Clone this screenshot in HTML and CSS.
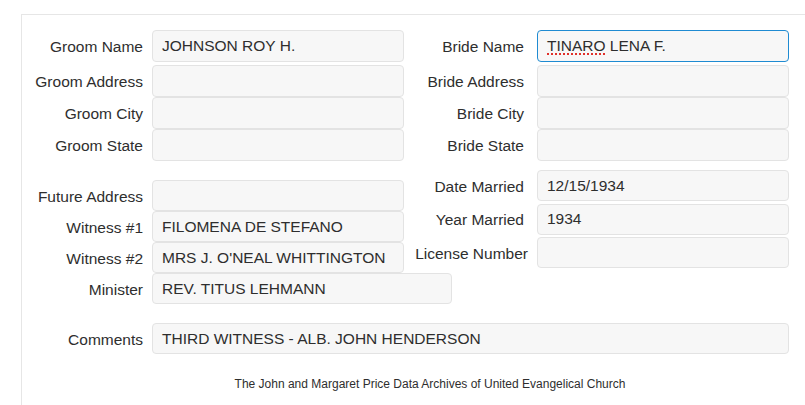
FILE: index.html
```html
<!DOCTYPE html>
<html>
<head>
<meta charset="utf-8">
<link rel="stylesheet" href="styles.css">
</head>
<body>
<div class="page">
  <div class="panel">
    <div class="grid-top">
      <div class="label l1 first">Groom Name</div>
      <div class="input first">JOHNSON ROY H.</div>
      <div class="label l2 first">Bride Name</div>
      <div class="input focus first"><span class="spell">TINARO</span>&nbsp;LENA F.</div>

      <div class="label l1">Groom Address</div>
      <div class="input"></div>
      <div class="label l2">Bride Address</div>
      <div class="input"></div>

      <div class="label l1">Groom City</div>
      <div class="input"></div>
      <div class="label l2">Bride City</div>
      <div class="input"></div>

      <div class="label l1">Groom State</div>
      <div class="input"></div>
      <div class="label l2">Bride State</div>
      <div class="input"></div>
    </div>

    <div class="section2">
      <div class="col-left">
        <div class="row">
          <div class="label l1">Future Address</div>
          <div class="input"></div>
        </div>
        <div class="row">
          <div class="label l1">Witness #1</div>
          <div class="input">FILOMENA DE STEFANO</div>
        </div>
        <div class="row">
          <div class="label l1">Witness #2</div>
          <div class="input">MRS J. O'NEAL WHITTINGTON</div>
        </div>
        <div class="row">
          <div class="label l1">Minister</div>
          <div class="input wide">REV. TITUS LEHMANN</div>
        </div>
      </div>
      <div class="col-right">
        <div class="row">
          <div class="label l2">Date Married</div>
          <div class="input">12/15/1934</div>
        </div>
        <div class="row">
          <div class="label l2">Year Married</div>
          <div class="input">1934</div>
        </div>
        <div class="row">
          <div class="label l2 tight">License Number</div>
          <div class="input"></div>
        </div>
      </div>
    </div>

    <div class="row comments">
      <div class="label l1">Comments</div>
      <div class="input full">THIRD WITNESS - ALB. JOHN HENDERSON</div>
    </div>

    <div class="footer">The John and Margaret Price Data Archives of United Evangelical Church</div>
  </div>
</div>
</body>
</html>
```

FILE: styles.css
```css
html, body {
  margin: 0;
  padding: 0;
  overflow: hidden;
  background: #ffffff;
}

body {
  font-family: "Liberation Sans", Arial, sans-serif;
  color: #2e2e2e;
  font-size: 15.5px;
}

.page {
  padding: 14px 0 0 21px;
}

.panel {
  height: calc(100vh - 14px);
  border-top: 1px solid #e6e6e6;
  border-left: 1px solid #e6e6e6;
  padding-top: 15px;
  box-sizing: border-box;
}

.grid-top {
  display: grid;
  grid-template-columns: 130px 252px 133px 252px;
  grid-template-rows: 35px 32px 32px 32px;
}

.grid-top .first {
  margin-bottom: 3px;
}

.label {
  display: flex;
  align-items: center;
  justify-content: flex-end;
  white-space: nowrap;
  color: #2e2e2e;
  flex-shrink: 0;
  padding-top: 2px;
  box-sizing: border-box;
}

.l1 {
  padding-right: 9px;
}

.l2 {
  padding-right: 13px;
}

.l2.tight {
  padding-right: 9px;
}

.input {
  box-sizing: border-box;
  height: 32px;
  border: 1px solid #e3e3e3;
  border-radius: 4px;
  background: #f7f7f7;
  padding: 0 9px;
  display: flex;
  align-items: center;
  color: #2e2e2e;
  white-space: nowrap;
  flex-shrink: 0;
}

.input.focus {
  border-color: #1f8bd2;
}

.spell {
  text-decoration: underline dotted #e0302a;
  text-decoration-thickness: 2px;
  text-underline-offset: 2px;
}

.section2 {
  display: flex;
  margin-top: 9px;
}

.col-left {
  width: 382px;
  flex-shrink: 0;
  padding-top: 10px;
  display: flex;
  flex-direction: column;
}

.col-left .row {
  display: flex;
  height: 31px;
}

.col-left .label {
  width: 130px;
}

.col-left .input {
  width: 252px;
  height: 31px;
}

.col-left .input.wide {
  width: 300px;
}

.col-right {
  display: flex;
  flex-direction: column;
  gap: 2.5px;
}

.col-right .row {
  display: flex;
  height: 31px;
}

.col-right .label {
  width: 133px;
}

.col-right .input {
  width: 252px;
  height: 31px;
}

.comments {
  display: flex;
  margin-top: 19px;
  height: 31px;
}

.comments .label {
  width: 130px;
}

.input.full {
  width: 637px;
  height: 31px;
}

.footer {
  padding-left: 33px;
  text-align: center;
  font-size: 12px;
  margin-top: 23px;
  color: #2e2e2e;
}
```
